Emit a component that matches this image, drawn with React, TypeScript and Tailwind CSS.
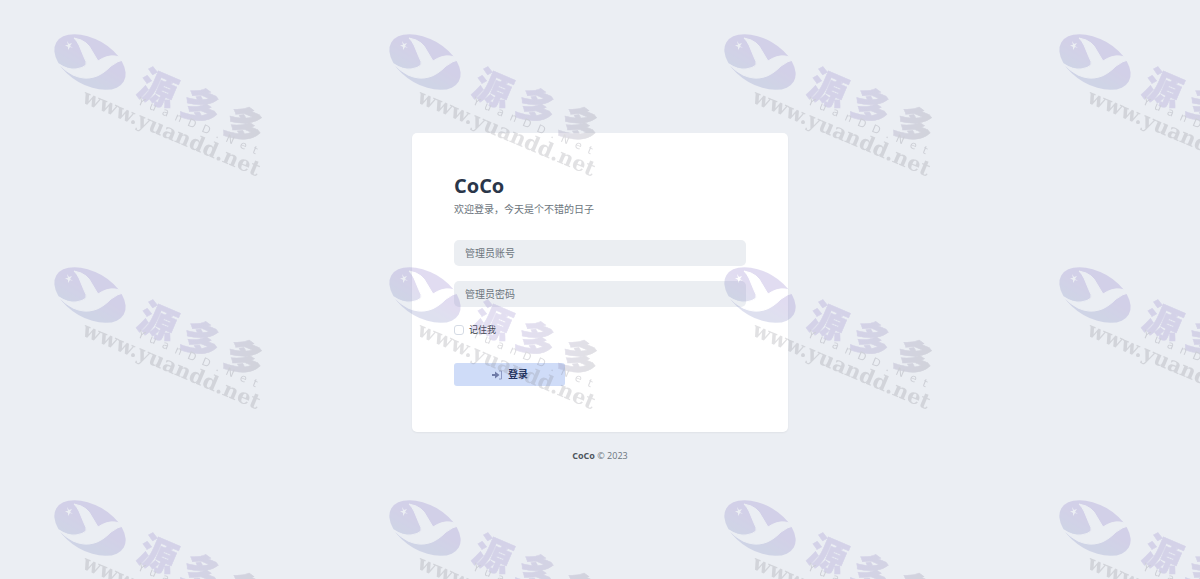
import { useState } from 'react';
import type { FormEvent } from 'react';

const TILES = Array.from({ length: 12 }, (_, i) => i);

function WatermarkTile() {
  return (
    <svg width="335" height="233" viewBox="0 0 335 233" aria-hidden="true">
      <defs>
        <linearGradient id="wm-name" x1="0" y1="0" x2="1" y2="0">
          <stop offset="0.3" stopColor="#9182c9" />
          <stop offset="0.65" stopColor="#8f86b0" />
          <stop offset="1" stopColor="#85858f" />
        </linearGradient>
        <linearGradient id="wm-globe" x1="0" y1="0" x2="0" y2="1">
          <stop offset="0.4" stopColor="#8c79c8" />
          <stop offset="0.8" stopColor="#8088c2" />
        </linearGradient>
        <mask id="wm-bird">
          <rect width="335" height="233" fill="#fff" />
          <path
            d="M74 38 L81 40 Q87 43 89 46 L98 61 Q107 55 115 56 Q121 57 126 59 Q117 61 111 66 Q102 75 94 77 Q84 80 73 75 Q65 71 59 64 Q68 70 76 69 Q83 68 86 65 Q87 62 84 57 L79 45 Q77 41 74 38 Z"
            stroke="#000"
          />
          <path d="M67 41 L69 44 L72 43 L70 46 L73 48 L70 47 L68 50 L68 47 L65 45 L68 45 Z" />
        </mask>
      </defs>
      <g opacity="0.25">
        <g mask="url(#wm-bird)">
          <ellipse cx="90" cy="62" rx="39" ry="23" transform="rotate(30 90 62)" fill="url(#wm-globe)" />
        </g>
        <text
          transform="translate(135 94) rotate(23)"
          fill="url(#wm-name)"
          stroke="url(#wm-name)"
          strokeWidth="0.5"
          className="font-['Noto_Sans_CJK_SC',sans-serif] text-[38px] font-black tracking-[9px]"
        >
          源多多
        </text>
        <text
          transform="translate(137 104) rotate(23)"
          fill="#777783"
          className="font-['DejaVu_Sans',sans-serif] text-[11px] tracking-[7px]"
        >
          YuanDD.Net
        </text>
        <text
          transform="translate(81 102) rotate(23)"
          fill="#8a8a92"
          className="font-['DejaVu_Serif',serif] text-[21px] font-bold"
        >
          www.yuandd.net
        </text>
      </g>
    </svg>
  );
}

function Watermark() {
  return (
    <div className="pointer-events-none absolute inset-0 grid grid-cols-[repeat(4,335px)] content-start overflow-hidden">
      {TILES.map((tile) => (
        <WatermarkTile key={tile} />
      ))}
    </div>
  );
}

function SignInIcon() {
  return (
    <svg viewBox="0 0 12 10" className="h-[10px] w-3" aria-hidden="true">
      <path d="M1 4h3V1.600L8.500 5 4 8.400V6H1z" fill="#6f7ba8" />
      <path d="M8 1h2.500v8H8" fill="none" stroke="#8e9ac4" />
    </svg>
  );
}

export default function App() {
  const [username, setUsername] = useState('');
  const [password, setPassword] = useState('');
  const [remember, setRemember] = useState(false);

  const handleSubmit = (e: FormEvent) => {
    e.preventDefault();
  };

  return (
    <div className="relative flex min-h-screen flex-col items-center justify-center bg-[#ebeef3] pt-[18px] font-['Open_Sans','Noto_Sans_CJK_SC',sans-serif]">
      <main className="w-full max-w-[376px] rounded-[5px] bg-white px-[42px] pt-10 pb-[46px] shadow-xs">
        <h1 className="text-[20px] leading-[26px] font-bold text-[#2a3649]">CoCo</h1>
        <p className="text-[10px] leading-5 text-[#6c757d]">欢迎登录，今天是个不错的日子</p>

        <form onSubmit={handleSubmit} className="mt-[21px]">
          <input
            type="text"
            aria-label="管理员账号"
            placeholder="管理员账号"
            value={username}
            onChange={(e) => setUsername(e.target.value)}
            className="mb-[15px] block h-[26px] w-full rounded-[5px] bg-[#ebeef2] px-[11px] text-[10px] text-[#2a3649] placeholder:text-[#6c757d] focus:outline-none"
          />
          <input
            type="password"
            aria-label="管理员密码"
            placeholder="管理员密码"
            value={password}
            onChange={(e) => setPassword(e.target.value)}
            className="block h-[26px] w-full rounded-[5px] bg-[#ebeef2] px-[11px] text-[10px] text-[#2a3649] placeholder:text-[#6c757d] focus:outline-none"
          />
          <label className="mt-4 flex w-fit items-center gap-[5px] text-[9px] leading-[14px] text-[#343a40]">
            <input
              type="checkbox"
              checked={remember}
              onChange={(e) => setRemember(e.target.checked)}
              className="size-[10px] appearance-none rounded-[3px] border border-[#d5dbe5] bg-white checked:bg-[#4c78dd]"
            />
            记住我
          </label>
          <button
            type="submit"
            className="mt-[26px] flex h-[23px] w-[111px] items-center justify-center gap-[5px] rounded-[3px] bg-[#cfdcf8] text-[10px] font-bold text-[#1f3160]"
          >
            <SignInIcon />
            登录
          </button>
        </form>
      </main>
      <footer className="mt-4 text-[9px] leading-4 text-[#6c757d]">
        <strong className="font-bold text-[#4f565e]">CoCo</strong> © 2023
      </footer>
      <Watermark />
    </div>
  );
}
